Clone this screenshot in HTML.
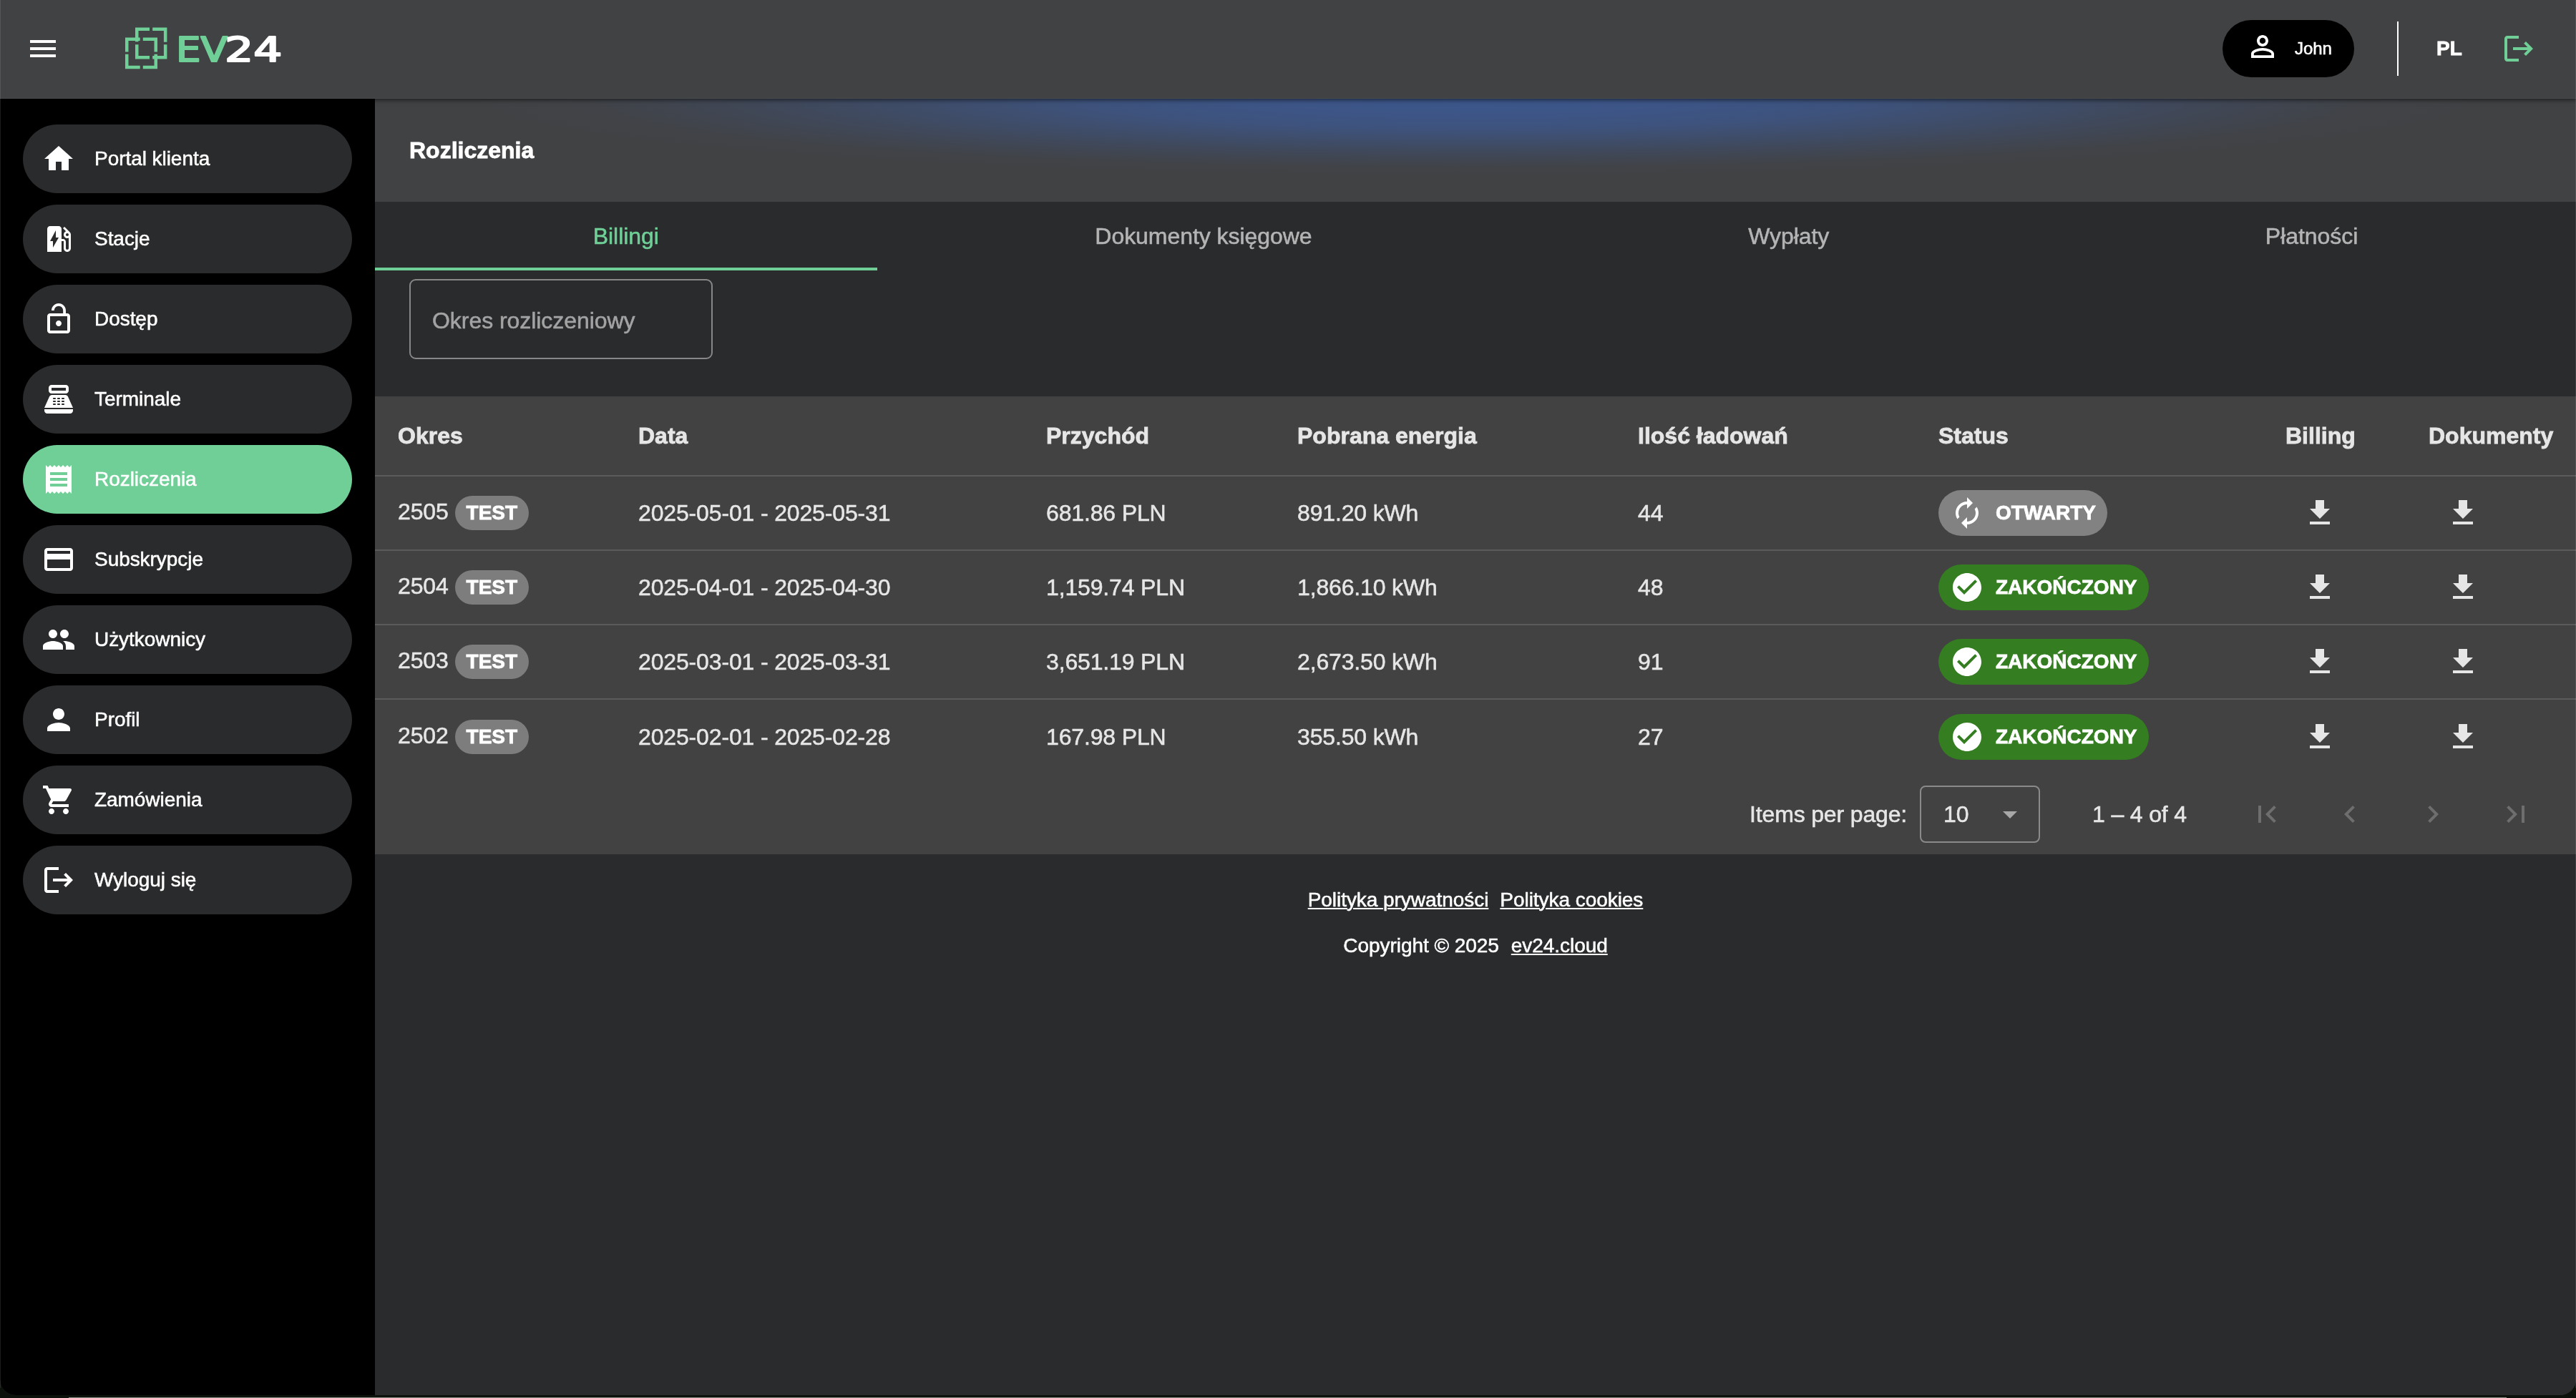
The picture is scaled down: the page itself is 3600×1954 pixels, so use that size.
<!DOCTYPE html>
<html lang="pl">
<head>
<meta charset="utf-8">
<title>EV24 - Rozliczenia</title>
<style>
*{box-sizing:border-box;margin:0;padding:0}
html,body{width:3600px;height:1954px;overflow:hidden;background:#0c110b}
body{font-family:"Liberation Sans",sans-serif;color:#fff;position:relative;-webkit-text-stroke:.55px;letter-spacing:-.05px}
.row,.pg{letter-spacing:-.15px}
.row.h,.chip,.st,.lang,.title h1{-webkit-text-stroke:.8px;letter-spacing:0}
svg{display:block}
.ic{width:48px;height:48px;fill:currentColor;flex:none}
.win{will-change:transform;position:absolute;left:0;top:0;width:3600px;height:1950px;overflow:hidden;background:#2a2b2d;border-radius:0 0 22px 22px}
.edge{position:absolute;top:0;width:1px;height:1940px;background:rgba(255,255,255,.11);z-index:9}
.desk{position:absolute;left:96px;right:97px;top:1953px;height:1px;background:#8b8b86}
/* header */
.hdr{position:absolute;left:0;top:0;width:3600px;height:138px;background:#414244;z-index:5;box-shadow:0 1px 6px 1px rgba(0,0,0,.55);border-bottom:1px solid #48494b}
.hdr .menu{position:absolute;left:36px;top:44px}
.logo{position:absolute;left:160px;top:20px;width:250px;height:100px}
.user{position:absolute;left:3106px;top:28px;width:184px;height:80px;border-radius:40px;background:#000;display:flex;align-items:center;padding-left:32px;font-size:24px}
.user span{margin-left:21px}
.user .ic{position:relative;top:-3px}
.vdiv{position:absolute;left:3350px;top:30px;width:2px;height:76px;background:#fff}
.lang{position:absolute;left:3405px;top:38px;height:60px;line-height:60px;font-size:28px;font-weight:700}
.lout{position:absolute;left:3496px;top:44px;color:#6fcf97}
/* sidebar */
.side{position:absolute;left:0;top:138px;width:524px;height:1812px;background:#000}
.nav{position:absolute;left:32px;width:460px;height:96px;border-radius:48px;background:#2a2b2d;display:flex;align-items:center;padding-left:26px;font-size:28px}
.nav span{margin-left:26px}
.nav.on{background:#6fcf97}
/* content */
.main{position:absolute;left:524px;top:138px;width:3076px;height:1812px;background:#2a2b2d}
.title{position:absolute;left:0;top:0;width:3076px;height:144px;background:#414244;overflow:hidden}
.title::before{content:"";position:absolute;left:0;top:0;right:0;bottom:0;background:radial-gradient(ellipse 1400px 108px at 50% 0,rgba(58,101,188,.6) 0,rgba(58,101,188,.56) 20%,rgba(58,101,188,.475) 38.4%,rgba(58,101,188,.32) 55%,rgba(58,101,188,.14) 74.5%,rgba(58,101,188,.03) 88.4%,rgba(58,101,188,0) 100%)}
.title h1{position:absolute;left:48px;top:0;height:144px;line-height:144px;font-size:32px;font-weight:700}
.tabs{position:absolute;left:0;top:144px;width:3076px;height:96px;display:flex}
.tab{flex:1 0 auto;padding:0 48px;height:96px;line-height:96px;text-align:center;font-size:32px;color:#b4b4b5;position:relative;white-space:nowrap}
.tab.on{color:#6fcf97}
.tab.on::after{content:"";position:absolute;left:0;right:0;bottom:0;height:4px;background:#6fcf97}
.field{position:absolute;left:48px;top:252px;width:424px;height:112px;border:2px solid #878788;border-radius:9px;font-size:32px;color:#a3a3a4;line-height:107px;padding-left:30px;padding-top:3px}
/* table */
.tbl{position:absolute;left:0;top:416px;width:3076px;height:640px;background:#424242;color:#e6e6e6;font-size:32px}
.row{position:absolute;left:0;width:3076px;height:104px;border-bottom:2px solid #5b5b5b}
.row.h{height:112px;font-weight:700}
.row.last{border-bottom:0}
.c{position:absolute;top:0;bottom:0;display:flex;align-items:center;white-space:nowrap}
.c1{left:32px}.c2{left:368px}.c3{left:938px}.c4{left:1289px}.c5{left:1765px}.c6{left:2185px}.c7{left:2670px}.c8{left:2870px}
.c7 .ic,.c8 .ic{margin-left:24px}
.chip{display:inline-flex;align-items:center;height:48px;border-radius:24px;background:#7d7d7d;color:#fff;font-size:28px;font-weight:700;padding:0 16px;margin-left:9px}
.st{display:flex;align-items:center;height:64px;border-radius:32px;padding:0 16px;color:#fff;font-size:28px;font-weight:700}
.st span{margin-left:16px}
.st.open{background:#828282}
.st.done{background:#347d21}
.pg{position:absolute;left:0;top:528px;width:3076px;height:112px}
.pg .lbl{position:absolute;left:1921px;top:0;line-height:112px}
.pg .sel{position:absolute;left:2159px;top:16px;width:168px;height:80px;border:2px solid #8a8a8a;border-radius:8px;line-height:76px;padding-left:31px}
.pg .sel svg{position:absolute;left:100px;top:14px;fill:#a8a8a8}
.pg .rng{position:absolute;left:2400px;top:0;line-height:112px}
.pg .nb{position:absolute;top:32px;color:#6e6e6e}
/* footer */
.foot{position:absolute;left:0;width:3076px;text-align:center;font-size:28px;line-height:40px;white-space:nowrap}
.foot a{color:#fff;text-decoration:underline;text-decoration-thickness:2px;text-underline-offset:2px}
</style>
</head>
<body>
<div class="win">
<div class="hdr">
  <svg class="ic menu" viewBox="0 0 24 24"><path d="M3 18h18v-2H3v2zm0-5h18v-2H3v2zm0-7v2h18V6H3z"/></svg>
  <svg class="logo" viewBox="160 20 250 100">
    <g fill="#6fcf97">
      <path d="M189 38.6h20v4.5h-15.5v15.2H189zM213.2 38.6h20.2v20.2h-4.5V43.1h-15.7zM189 62.2h4.5v15.9H209v4.5h-20zM228.9 62.2h4.5v20.4h-20.2v-4.5h15.7z"/>
      <path d="M175 52.4h20.7v4.5h-16.2v15.5H175zM199.8 52.4H220v20h-4.5V56.900h-15.7zM175 75.800h4.5v15.900h16.200v4.500H175zM215.500 75.800h4.500v20.400h-20.200v-4.500h15.700z"/>
    </g>
    <g font-family="DejaVu Sans, Liberation Sans, sans-serif" font-size="47.5" stroke-width="2.2" stroke-linejoin="round" style="letter-spacing:0;-webkit-text-stroke:0">
      <text x="246" y="85.800" fill="#6fcf97" stroke="#6fcf97" textLength="72" lengthAdjust="spacingAndGlyphs">EV</text>
      <text x="314" y="85.800" fill="#ffffff" stroke="#ffffff" textLength="80.300" lengthAdjust="spacingAndGlyphs">24</text>
    </g>
  </svg>
  <div class="user"><svg class="ic" viewBox="0 0 24 24"><path d="M12 5.900c1.160 0 2.100.940 2.100 2.100s-.940 2.100-2.100 2.100S9.900 9.160 9.900 8s.940-2.100 2.100-2.100m0 9c2.970 0 6.100 1.460 6.100 2.100v1.100H5.900V17c0-.640 3.130-2.100 6.100-2.100M12 4C9.790 4 8 5.790 8 8s1.790 4 4 4 4-1.790 4-4-1.790-4-4-4zm0 9c-2.670 0-8 1.340-8 4v3h16v-3c0-2.660-5.330-4-8-4z"/></svg><span>John</span></div>
  <div class="vdiv"></div>
  <div class="lang">PL</div>
  <svg class="ic lout" viewBox="0 0 24 24"><path d="M17 7l-1.410 1.410L18.170 11H8v2h10.170l-2.580 2.580L17 17l5-5zM4 5h8V3H4c-1.100 0-2 .900-2 2v14c0 1.100.900 2 2 2h8v-2H4V5z"/></svg>
</div>

<div class="side">
  <div class="nav" style="top:36px"><svg class="ic" viewBox="0 0 24 24"><path d="M10 20v-6h4v6h5v-8h3L12 3 2 12h3v8z"/></svg><span>Portal klienta</span></div>
  <div class="nav" style="top:148px"><svg class="ic" viewBox="0 0 24 24"><path d="M19.770 7.230l.010-.010-3.720-3.720L15 4.560l2.110 2.110c-.940.360-1.610 1.260-1.610 2.330 0 1.380 1.120 2.500 2.500 2.500.360 0 .690-.080 1-.210v7.210c0 .550-.450 1-1 1s-1-.450-1-1V14c0-1.100-.900-2-2-2h-1V5c0-1.100-.900-2-2-2H6c-1.100 0-2 .900-2 2v16h10v-7.500h1.500v5c0 1.380 1.120 2.500 2.500 2.500s2.500-1.120 2.500-2.500V9c0-.690-.280-1.320-.730-1.770zM18 10c-.550 0-1-.450-1-1s.450-1 1-1 1 .450 1 1-.450 1-1 1zM8 18v-4.500H6L10 6v5h2l-4 7z"/></svg><span>Stacje</span></div>
  <div class="nav" style="top:260px"><svg class="ic" viewBox="0 0 24 24"><path d="M12 17c1.100 0 2-.900 2-2s-.900-2-2-2-2 .900-2 2 .900 2 2 2zm6-9h-1V6c0-2.760-2.240-5-5-5S7 3.240 7 6h1.900c0-1.710 1.390-3.100 3.100-3.100 1.710 0 3.100 1.390 3.100 3.100v2H6c-1.100 0-2 .900-2 2v10c0 1.100.900 2 2 2h12c1.100 0 2-.900 2-2V10c0-1.100-.900-2-2-2zm0 12H6V10h12v10z"/></svg><span>Dostęp</span></div>
  <div class="nav" style="top:372px"><svg class="ic" viewBox="0 0 24 24"><path d="M17 2H7c-1.100 0-2 .900-2 2v2c0 1.100.900 2 2 2h10c1.100 0 2-.900 2-2V4c0-1.100-.900-2-2-2zm0 4H7V4h10v2zm3 16H4c-1.100 0-2-.900-2-2v-1h20v1c0 1.100-.900 2-2 2zm-1.470-11.810C18.210 9.470 17.490 9 16.700 9H7.300c-.790 0-1.510.470-1.830 1.190L2 18h20l-3.470-7.810zM9.500 16h-1c-.280 0-.500-.220-.500-.500s.220-.500.500-.500h1c.280 0 .500.220.500.500s-.220.500-.500.500zm0-2h-1c-.280 0-.500-.220-.500-.500s.220-.500.500-.500h1c.280 0 .500.220.500.500s-.220.500-.500.500zm0-2h-1c-.280 0-.500-.220-.500-.500s.220-.500.500-.500h1c.280 0 .500.220.500.500s-.220.500-.500.500zm3 4h-1c-.280 0-.500-.220-.500-.500s.220-.500.500-.500h1c.280 0 .500.220.500.500s-.220.500-.500.500zm0-2h-1c-.280 0-.500-.220-.500-.500s.220-.500.500-.500h1c.280 0 .500.220.500.500s-.220.500-.500.500zm0-2h-1c-.280 0-.500-.220-.500-.500s.220-.500.500-.500h1c.280 0 .500.220.500.500s-.220.500-.500.500zm3 4h-1c-.280 0-.500-.220-.500-.500s.220-.500.500-.500h1c.280 0 .500.220.500.500s-.220.500-.500.500zm0-2h-1c-.280 0-.500-.220-.500-.500s.220-.500.500-.500h1c.280 0 .500.220.500.500s-.220.500-.500.500zm0-2h-1c-.280 0-.500-.220-.500-.500s.220-.500.500-.500h1c.280 0 .500.220.500.500s-.220.500-.500.500z"/></svg><span>Terminale</span></div>
  <div class="nav on" style="top:484px"><svg class="ic" viewBox="0 0 24 24"><path d="M18 17H6v-2h12v2zm0-4H6v-2h12v2zm0-4H6V7h12v2zM3 22l1.500-1.500L6 22l1.500-1.500L9 22l1.500-1.500L12 22l1.500-1.500L15 22l1.500-1.500L18 22l1.500-1.500L21 22V2l-1.500 1.500L18 2l-1.500 1.500L15 2l-1.500 1.500L12 2l-1.500 1.500L9 2 7.500 3.500 6 2 4.500 3.500 3 2v20z"/></svg><span>Rozliczenia</span></div>
  <div class="nav" style="top:596px"><svg class="ic" viewBox="0 0 24 24"><path d="M20 4H4c-1.110 0-1.990.890-1.990 2L2 18c0 1.110.890 2 2 2h16c1.110 0 2-.890 2-2V6c0-1.110-.890-2-2-2zm0 14H4v-6h16v6zm0-10H4V6h16v2z"/></svg><span>Subskrypcje</span></div>
  <div class="nav" style="top:708px"><svg class="ic" viewBox="0 0 24 24"><path d="M16 11c1.660 0 2.990-1.340 2.990-3S17.660 5 16 5c-1.660 0-3 1.340-3 3s1.340 3 3 3zm-8 0c1.660 0 2.990-1.340 2.990-3S9.660 5 8 5C6.340 5 5 6.340 5 8s1.340 3 3 3zm0 2c-2.330 0-7 1.170-7 3.500V19h14v-2.500c0-2.330-4.670-3.500-7-3.500zm8 0c-.290 0-.620.020-.970.050 1.160.840 1.970 1.970 1.970 3.450V19h6v-2.500c0-2.330-4.670-3.500-7-3.500z"/></svg><span>Użytkownicy</span></div>
  <div class="nav" style="top:820px"><svg class="ic" viewBox="0 0 24 24"><path d="M12 12c2.210 0 4-1.790 4-4s-1.790-4-4-4-4 1.790-4 4 1.790 4 4 4zm0 2c-2.670 0-8 1.340-8 4v2h16v-2c0-2.660-5.330-4-8-4z"/></svg><span>Profil</span></div>
  <div class="nav" style="top:932px"><svg class="ic" viewBox="0 0 24 24"><path d="M7 18c-1.100 0-1.990.900-1.990 2S5.900 22 7 22s2-.900 2-2-.900-2-2-2zM1 2v2h2l3.600 7.590-1.350 2.450c-.160.280-.250.610-.250.960 0 1.100.900 2 2 2h12v-2H7.420c-.140 0-.250-.110-.250-.250l.030-.120.900-1.630h7.450c.750 0 1.410-.410 1.750-1.030l3.580-6.490c.080-.140.120-.310.120-.480 0-.550-.450-1-1-1H5.210l-.940-2H1zm16 16c-1.100 0-1.990.900-1.990 2s.890 2 1.990 2 2-.900 2-2-.900-2-2-2z"/></svg><span>Zamówienia</span></div>
  <div class="nav" style="top:1044px"><svg class="ic" viewBox="0 0 24 24"><path d="M17 7l-1.410 1.410L18.170 11H8v2h10.170l-2.580 2.580L17 17l5-5zM4 5h8V3H4c-1.100 0-2 .900-2 2v14c0 1.100.900 2 2 2h8v-2H4V5z"/></svg><span>Wyloguj się</span></div>
</div>

<div class="main">
  <div class="title"><h1>Rozliczenia</h1></div>
  <div class="tabs"><div class="tab on">Billingi</div><div class="tab">Dokumenty księgowe</div><div class="tab">Wypłaty</div><div class="tab">Płatności</div></div>
  <div class="field">Okres rozliczeniowy</div>
  <div class="tbl">
    <div class="row h" style="top:0"><div class="c c1">Okres</div><div class="c c2">Data</div><div class="c c3">Przychód</div><div class="c c4">Pobrana energia</div><div class="c c5">Ilość ładowań</div><div class="c c6">Status</div><div class="c c7">Billing</div><div class="c c8">Dokumenty</div></div>
    <div class="row" style="top:112px"><div class="c c1"><span class="per">2505<span class="chip">TEST</span></span></div><div class="c c2">2025-05-01 - 2025-05-31</div><div class="c c3">681.86 PLN</div><div class="c c4">891.20 kWh</div><div class="c c5">44</div><div class="c c6"><div class="st open"><svg class="ic" viewBox="0 0 24 24"><path d="M12 6v3l4-4-4-4v3c-4.420 0-8 3.580-8 8 0 1.570.460 3.030 1.240 4.260L6.700 14.800c-.450-.830-.700-1.790-.700-2.800 0-3.310 2.690-6 6-6zm6.760 1.740L17.300 9.200c.440.840.700 1.790.700 2.800 0 3.310-2.690 6-6 6v-3l-4 4 4 4v-3c4.420 0 8-3.580 8-8 0-1.570-.460-3.030-1.240-4.260z"/></svg><span>OTWARTY</span></div></div><div class="c c7"><svg class="ic" viewBox="0 0 24 24"><path d="M19 9h-4V3H9v6H5l7 7 7-7zM5 18v2h14v-2H5z"/></svg></div><div class="c c8"><svg class="ic" viewBox="0 0 24 24"><path d="M19 9h-4V3H9v6H5l7 7 7-7zM5 18v2h14v-2H5z"/></svg></div></div>
    <div class="row" style="top:216px"><div class="c c1"><span class="per">2504<span class="chip">TEST</span></span></div><div class="c c2">2025-04-01 - 2025-04-30</div><div class="c c3">1,159.74 PLN</div><div class="c c4">1,866.10 kWh</div><div class="c c5">48</div><div class="c c6"><div class="st done"><svg class="ic" viewBox="0 0 24 24"><path d="M12 2C6.480 2 2 6.480 2 12s4.480 10 10 10 10-4.480 10-10S17.520 2 12 2zm-2 15l-5-5 1.410-1.410L10 14.170l7.590-7.590L19 8l-9 9z"/></svg><span>ZAKOŃCZONY</span></div></div><div class="c c7"><svg class="ic" viewBox="0 0 24 24"><path d="M19 9h-4V3H9v6H5l7 7 7-7zM5 18v2h14v-2H5z"/></svg></div><div class="c c8"><svg class="ic" viewBox="0 0 24 24"><path d="M19 9h-4V3H9v6H5l7 7 7-7zM5 18v2h14v-2H5z"/></svg></div></div>
    <div class="row" style="top:320px"><div class="c c1"><span class="per">2503<span class="chip">TEST</span></span></div><div class="c c2">2025-03-01 - 2025-03-31</div><div class="c c3">3,651.19 PLN</div><div class="c c4">2,673.50 kWh</div><div class="c c5">91</div><div class="c c6"><div class="st done"><svg class="ic" viewBox="0 0 24 24"><path d="M12 2C6.480 2 2 6.480 2 12s4.480 10 10 10 10-4.480 10-10S17.520 2 12 2zm-2 15l-5-5 1.410-1.410L10 14.170l7.590-7.590L19 8l-9 9z"/></svg><span>ZAKOŃCZONY</span></div></div><div class="c c7"><svg class="ic" viewBox="0 0 24 24"><path d="M19 9h-4V3H9v6H5l7 7 7-7zM5 18v2h14v-2H5z"/></svg></div><div class="c c8"><svg class="ic" viewBox="0 0 24 24"><path d="M19 9h-4V3H9v6H5l7 7 7-7zM5 18v2h14v-2H5z"/></svg></div></div>
    <div class="row last" style="top:424px"><div class="c c1"><span class="per">2502<span class="chip">TEST</span></span></div><div class="c c2">2025-02-01 - 2025-02-28</div><div class="c c3">167.98 PLN</div><div class="c c4">355.50 kWh</div><div class="c c5">27</div><div class="c c6"><div class="st done"><svg class="ic" viewBox="0 0 24 24"><path d="M12 2C6.480 2 2 6.480 2 12s4.480 10 10 10 10-4.480 10-10S17.520 2 12 2zm-2 15l-5-5 1.410-1.410L10 14.170l7.590-7.590L19 8l-9 9z"/></svg><span>ZAKOŃCZONY</span></div></div><div class="c c7"><svg class="ic" viewBox="0 0 24 24"><path d="M19 9h-4V3H9v6H5l7 7 7-7zM5 18v2h14v-2H5z"/></svg></div><div class="c c8"><svg class="ic" viewBox="0 0 24 24"><path d="M19 9h-4V3H9v6H5l7 7 7-7zM5 18v2h14v-2H5z"/></svg></div></div>
    <div class="pg">
      <div class="lbl">Items per page:</div>
      <div class="sel">10<svg width="48" height="48" viewBox="0 0 24 24"><path d="M7 10l5 5 5-5z"/></svg></div>
      <div class="rng">1 – 4 of 4</div>
      <svg class="ic nb" style="left:2620px" viewBox="0 0 24 24"><path d="M18.410 16.590L13.820 12l4.590-4.590L17 6l-6 6 6 6zM6 6h2v12H6z"/></svg>
      <svg class="ic nb" style="left:2736px" viewBox="0 0 24 24"><path d="M15.410 7.410L14 6l-6 6 6 6 1.410-1.410L10.830 12z"/></svg>
      <svg class="ic nb" style="left:2852px" viewBox="0 0 24 24"><path d="M10 6L8.590 7.410 13.170 12l-4.580 4.590L10 18l6-6z"/></svg>
      <svg class="ic nb" style="left:2968px" viewBox="0 0 24 24"><path d="M5.590 7.410L10.180 12l-4.590 4.590L7 18l6-6-6-6zM16 6h2v12h-2z"/></svg>
    </div>
  </div>
  <div class="foot" style="top:1100px"><a>Polityka prywatności</a><a style="margin-left:16px">Polityka cookies</a></div>
  <div class="foot" style="top:1164px">Copyright © 2025<a style="margin-left:17px">ev24.cloud</a></div>
</div>

</div>
<div class="desk"></div>
<div class="edge" style="left:0"></div><div class="edge" style="left:3599px"></div>
</body>
</html>
